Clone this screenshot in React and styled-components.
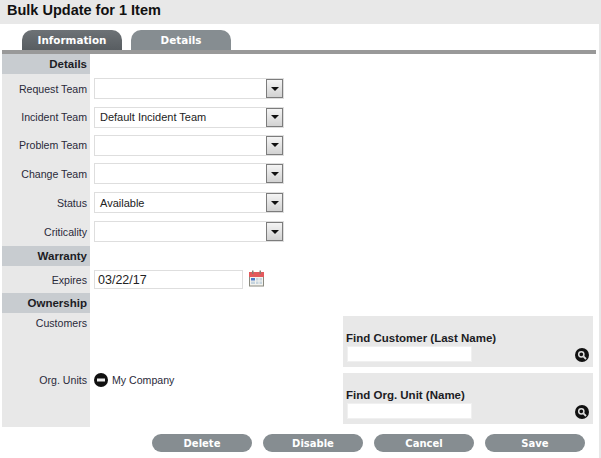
import styled, { createGlobalStyle } from 'styled-components';

const GlobalStyle = createGlobalStyle`
  html, body { margin: 0; padding: 0; background: #fff; }
  body { font-family: "Liberation Sans", Arial, sans-serif; font-size: 11px; color: #222; }
`

const Page = styled.div`
  box-sizing: border-box;
  width: 601px;
  height: 458px;
  overflow: hidden;
  display: flex;
  flex-direction: column;
  border-right: 2px solid #e8e8e8;
`

const Title = styled.h1`
  margin: 0;
  height: 24px;
  padding: 0 0 0 7px;
  background: #e8e8e8;
  font-size: 14.5px;
  line-height: 21px;
  font-weight: bold;
  color: #111;
`

const Tabs = styled.div`
  display: flex;
  gap: 9px;
  height: 20px;
  margin-top: 6px;
  padding-left: 22px;
`

const Tab = styled.div`
  width: 100px;
  height: 20px;
  border-radius: 10px 10px 0 0;
  background: ${({ $active }) => ($active ? 'linear-gradient(#6d7276, #585d61)' : '#868d91')};
  color: #fff;
  font-family: "DejaVu Sans", Verdana, sans-serif;
  font-size: 10.4px;
  font-weight: bold;
  line-height: 21px;
  text-align: center;
`

const Rule = styled.div`
  height: 4px;
  margin: 0 3px 0 2px;
  background: #999;
`

const Form = styled.div`
  display: grid;
  grid-template-columns: 88px 1fr;
  margin-left: 2px;
`

const SectionHead = styled.div`
  grid-column: 1;
  height: 20px;
  padding-right: 3px;
  background: #c8ccd0;
  font-size: 11.5px;
  font-weight: bold;
  line-height: 20px;
  text-align: right;
  color: #1c1c24;
`

const SectionGap = styled.div`
  grid-column: 2;
  height: 20px;
`

const Label = styled.div`
  grid-column: 1;
  height: ${({ $h }) => $h}px;
  padding-right: 3px;
  background: #e8e8e8;
  font-size: 10.6px;
  line-height: ${({ $lh }) => $lh}px;
  text-align: right;
  color: #2a2a3a;
`

const FieldCell = styled.div`
  grid-column: 2;
  height: ${({ $h }) => $h}px;
  padding-left: 4px;
  display: flex;
  align-items: center;
`

const SelectBox = styled.div`
  box-sizing: border-box;
  width: 190px;
  height: 21px;
  border: 1px solid #dedede;
  background: #fff;
  display: flex;
  align-items: center;
  padding-left: 5px;
  color: #222;
`

const ArrowButton = styled.span`
  box-sizing: border-box;
  width: 17px;
  height: 19px;
  margin-left: auto;
  border: 1px solid #7c7c7c;
  background: linear-gradient(#f4f4f4, #d2d2d2);
  display: flex;
  align-items: center;
  justify-content: center;
  &::after {
    content: '';
    border-left: 4px solid transparent;
    border-right: 4px solid transparent;
    border-top: 4px solid #111;
  }
`

const DateInput = styled.div`
  box-sizing: border-box;
  width: 149px;
  height: 19px;
  border: 1px solid #dedede;
  padding-left: 3px;
  font-size: 12.5px;
  line-height: 18px;
  color: #222;
`

const CalendarIcon = styled.svg`
  width: 16px;
  height: 17px;
  margin-left: 6px;
  margin-top: -2px;
`

const OwnershipCell = styled.div`
  grid-column: 2;
  grid-row: span 2;
  height: 114px;
  padding-left: 4px;
  display: grid;
  grid-template-columns: 1fr 250px;
  padding-right: 6px;
`

const UnitEntry = styled.div`
  align-self: start;
  margin-top: 60px;
  display: flex;
  align-items: center;
  gap: 4px;
  font-size: 10.6px;
  color: #2a2a3a;
`

const MinusIcon = styled.svg`
  width: 14px;
  height: 14px;
`

const FindColumn = styled.div`
  display: flex;
  flex-direction: column;
  gap: 6px;
  padding-top: 3px;
`

const FindPanel = styled.div`
  box-sizing: border-box;
  height: 51px;
  padding: 14px 3px 0 3px;
  background: #e8e8e8;
  position: relative;
  display: flex;
  flex-direction: column;
`

const FindLabel = styled.div`
  font-size: 11.5px;
  font-weight: bold;
  line-height: 16px;
  color: #1c1c24;
`

const FindInput = styled.div`
  box-sizing: border-box;
  width: 125px;
  height: 16px;
  margin-left: 1px;
  background: #fff;
  border: 1px solid #f0f0f0;
`

const SearchIcon = styled.svg`
  position: absolute;
  right: 4px;
  bottom: 5px;
  width: 14px;
  height: 14px;
`

const Actions = styled.div`
  display: flex;
  justify-content: flex-end;
  gap: 11px;
  margin-top: 7px;
  padding-right: 14px;
`

const ActionButton = styled.div`
  width: 100px;
  height: 18px;
  border-radius: 9px;
  background: #868d91;
  color: #fff;
  font-family: "DejaVu Sans", Verdana, sans-serif;
  font-size: 10px;
  font-weight: bold;
  line-height: 19px;
  text-align: center;
`

const teams = [
  ['Request Team', '', 29],
  ['Incident Team', 'Default Incident Team', 28],
  ['Problem Team', '', 28],
  ['Change Team', '', 29],
  ['Status', 'Available', 29],
  ['Criticality', '', 29],
]

function App() {
  return (
    <Page>
      <GlobalStyle />
      <Title>Bulk Update for 1 Item</Title>
      <Tabs>
        <Tab $active>Information</Tab>
        <Tab>Details</Tab>
      </Tabs>
      <Rule />
      <Form>
        <SectionHead>Details</SectionHead>
        <SectionGap />
        {teams.map(([label, value, h]) => (
          <Row key={label} label={label} h={h}>
            <SelectBox>
              {value}
              <ArrowButton />
            </SelectBox>
          </Row>
        ))}
        <SectionHead>Warranty</SectionHead>
        <SectionGap />
        <Row label="Expires" h={27}>
          <DateInput>03/22/17</DateInput>
          <CalendarIcon viewBox="0 0 16 17">
            <rect x="0.5" y="2.5" width="14" height="13.5" fill="#f3f3ef" stroke="#8a8a80" />
            <rect x="0" y="2" width="15" height="5" fill="#e2595c" />
            <rect x="3" y="0.5" width="1.5" height="3.5" fill="#8a7a70" />
            <rect x="10.5" y="0.5" width="1.5" height="3.5" fill="#8a7a70" />
            <rect x="2" y="8" width="4" height="2.5" fill="#4a78c8" />
            <rect x="7" y="8" width="2.5" height="2.5" fill="#c6d4de" />
            <rect x="10.5" y="8" width="2.5" height="2.5" fill="#c6d4de" />
            <rect x="2" y="11.5" width="4" height="2.5" fill="#c6d4de" />
            <rect x="7" y="11.5" width="2.5" height="2.5" fill="#c6d4de" />
            <rect x="10.5" y="11.5" width="2.5" height="2.5" fill="#c6d4de" />
          </CalendarIcon>
        </Row>
        <SectionHead>Ownership</SectionHead>
        <SectionGap />
        <Label $h={57} $lh={20}>Customers</Label>
        <OwnershipCell>
          <UnitEntry>
            <MinusIcon viewBox="0 0 14 14">
              <circle cx="7" cy="7" r="7" fill="#111" />
              <rect x="3" y="5.5" width="8" height="3" fill="#eee" />
            </MinusIcon>
            My Company
          </UnitEntry>
          <FindColumn>
            <FindBlock label="Find Customer (Last Name)" />
            <FindBlock label="Find Org. Unit (Name)" />
          </FindColumn>
        </OwnershipCell>
        <Label $h={57} $lh={20}>Org. Units</Label>
      </Form>
      <Actions>
        <ActionButton>Delete</ActionButton>
        <ActionButton>Disable</ActionButton>
        <ActionButton>Cancel</ActionButton>
        <ActionButton>Save</ActionButton>
      </Actions>
    </Page>
  );
}

function Row({ label, h, children }) {
  return (
    <>
      <Label $h={h} $lh={h + 1}>{label}</Label>
      <FieldCell $h={h}>{children}</FieldCell>
    </>
  )
}

function FindBlock({ label }) {
  return (
    <FindPanel>
      <FindLabel>{label}</FindLabel>
      <FindInput />
      <SearchIcon viewBox="0 0 14 14">
        <circle cx="7" cy="7" r="7" fill="#111" />
        <circle cx="6.3" cy="6.3" r="2.6" fill="#111" stroke="#ddd" strokeWidth="1.5" />
        <line x1="8.4" y1="8.4" x2="11" y2="11" stroke="#ddd" strokeWidth="1.8" />
      </SearchIcon>
    </FindPanel>
  )
}

export default App;
